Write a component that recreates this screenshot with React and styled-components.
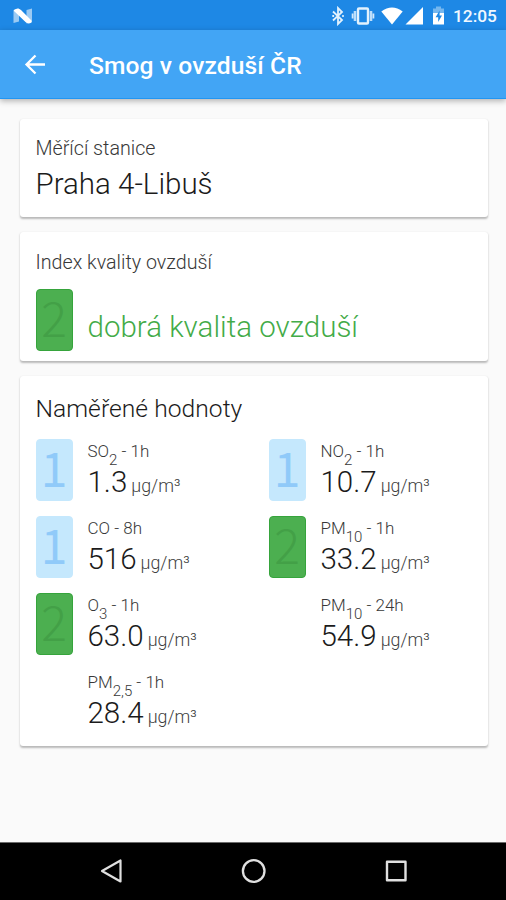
import React from 'react';
import styled, { createGlobalStyle } from 'styled-components';

const Global = createGlobalStyle`
  * { box-sizing: border-box; }
  body { margin: 0; background: #fafafa; }
`;

const Screen = styled.div`
  width: 506px;
  height: 900px;
  display: flex;
  flex-direction: column;
  overflow: hidden;
  background: #fafafa;
  color: #1b1b1b;
  font-family: Roboto, sans-serif;
`;

const StatusBar = styled.header`
  height: 30px;
  flex: none;
  display: flex;
  align-items: center;
  justify-content: space-between;
  padding: 1px 9px 0 13px;
  background: #1e88e5;
`;

const StatusIcons = styled.div`
  display: flex;
  align-items: center;
`;

const Clock = styled.span`
  margin-left: 8px;
  width: 44px;
  font-size: 17.3px;
  font-weight: 500;
  line-height: 28px;
  white-space: nowrap;
  color: #f1f8ff;
`;

const AppBar = styled.div`
  height: 69px;
  flex: none;
  display: flex;
  align-items: center;
  padding: 1px 24px 0;
  background: #42a5f5;
  border-bottom: 1px solid #2196f3;
  box-shadow: 0 2px 6px rgba(0, 0, 0, 0.3);
  z-index: 1;
`;

const Title = styled.h1`
  margin: 3px 0 0 42px;
  font-size: 24.6px;
  font-weight: 500;
  line-height: 30px;
  letter-spacing: 0.1px;
  white-space: nowrap;
  color: #fff;
`;

const Content = styled.main`
  flex: 1;
  display: flex;
  flex-direction: column;
  gap: 15px;
  padding: 20px 18px 0 20px;
`;

const Card = styled.section`
  height: ${(p) => p.$height}px;
  flex: none;
  padding: 0 15.5px;
  border-radius: 3px;
  background: #fff;
  box-shadow: 0 1.5px 2px rgba(0, 0, 0, 0.26), 0 0 1px rgba(0, 0, 0, 0.05);
`;

const Caption = styled.div`
  padding-top: ${(p) => p.$top || 17}px;
  font-size: 19.7px;
  font-weight: 300;
  line-height: 25px;
  white-space: nowrap;
  color: #383838;
`;

const Station = styled.div`
  margin-top: 5px;
  font-size: 29.5px;
  font-weight: 300;
  line-height: 36px;
  white-space: nowrap;
`;

const Heading = styled.h2`
  margin: 0;
  padding-top: 18px;
  font-size: 24.6px;
  font-weight: 300;
  line-height: 30px;
  letter-spacing: 0.05px;
`;

const Summary = styled.div`
  display: flex;
  gap: 15px;
  margin-top: 14px;
`;

const Verdict = styled.div`
  padding-top: 20px;
  font-size: 29.5px;
  font-weight: 300;
  line-height: 36px;
  white-space: nowrap;
  color: #43ab48;
`;

const palettes = {
  1: { fill: '#c5e8fd', digit: '#90caf9', edge: '#c5e8fd', weight: 400 },
  2: { fill: '#4caf50', digit: '#43a047', edge: '#36a43c', weight: 300 },
};

const Badge = styled.div`
  width: 37px;
  height: 62px;
  flex: none;
  display: flex;
  align-items: center;
  justify-content: center;
  border: 1px solid ${(p) => (p.$level ? palettes[p.$level].edge : 'transparent')};
  border-radius: 4px;
  background: ${(p) => (p.$level ? palettes[p.$level].fill : 'transparent')};
  color: ${(p) => (p.$level ? palettes[p.$level].digit : 'transparent')};
  font-family: 'Noto Sans CJK SC', 'Noto Sans', sans-serif;
  font-size: 48px;
  font-weight: ${(p) => (p.$level ? palettes[p.$level].weight : 400)};
  line-height: 60px;
  padding-bottom: 9px;
`;

const Grid = styled.div`
  display: grid;
  grid-template-columns: 233px 1fr;
  grid-auto-rows: 77px;
  margin-top: 15px;
`;

const Cell = styled.div`
  display: flex;
  gap: 15px;
`;

const Reading = styled.div`
  padding-top: 2px;
`;

const Label = styled.div`
  height: 24px;
  font-size: 17px;
  font-weight: 300;
  line-height: 20px;
  white-space: nowrap;
  color: #383838;
`;

const Sub = styled.sub`
  font-size: 15px;
  line-height: 0;
  vertical-align: -8px;
`;

const Value = styled.div`
  display: flex;
  align-items: baseline;
  gap: 4px;
  font-size: 29.5px;
  font-weight: 300;
  line-height: 34px;
  white-space: nowrap;
`;

const Unit = styled.span`
  font-size: 17.8px;
  color: #404040;
`;

const NavBar = styled.nav`
  height: 58px;
  flex: none;
  display: flex;
  align-items: center;
  justify-content: space-between;
  padding: 0 98px 2px 99px;
  border-top: 1px solid #6b6b6b;
  background: #000;
`;

const Icon = styled.svg`
  display: block;
  flex: none;
  margin-left: ${(p) => p.$gap || 0}px;
`;

const readings = [
  { level: 1, name: 'SO', sub: '2', period: '1h', value: '1.3' },
  { level: 1, name: 'NO', sub: '2', period: '1h', value: '10.7' },
  { level: 1, name: 'CO', sub: '', period: '8h', value: '516' },
  { level: 2, name: 'PM', sub: '10', period: '1h', value: '33.2' },
  { level: 2, name: 'O', sub: '3', period: '1h', value: '63.0' },
  { level: 0, name: 'PM', sub: '10', period: '24h', value: '54.9' },
  { level: 0, name: 'PM', sub: '2,5', period: '1h', value: '28.4' },
];

function StatusGlyphs() {
  return (
    <>
      <Icon width="12" height="20" viewBox="0 0 12 20" fill="none" stroke="#e3f2fd" strokeWidth="1.8">
        <path d="M1 5.5 L10 14 L6 18 V2 L10 6 L1 14.5" />
        <path d="M0.3 10h1.8M10.2 10h1.6" />
      </Icon>
      <Icon $gap={7} width="24" height="20" viewBox="0 0 24 20">
        <rect x="7" y="2.5" width="10" height="15" rx="1" fill="none" stroke="#e3f2fd" strokeWidth="2.4" />
        <path d="M4 5v10M20 5v10" stroke="#bbdefb" strokeWidth="2.6" />
        <path d="M1.6 7.5v5M22.4 7.5v5" stroke="#d3e9fc" strokeWidth="1.8" />
      </Icon>
      <Icon $gap={6} width="22" height="18" viewBox="0 0 22 18">
        <path d="M0.3 4.4 Q11 -3.4 21.7 4.4 L11 17.6 Z" fill="#fff" />
      </Icon>
      <Icon $gap={2} width="18" height="18" viewBox="0 0 18 18">
        <path d="M18 0V17.5H0.5Z" fill="#fff" />
      </Icon>
      <Icon $gap={9} width="13" height="19" viewBox="0 0 13 19">
        <path d="M4 0.5H9V2.5H12V9H1V2.5H4Z" fill="#75b7ef" />
        <path d="M1 7H12V18.5H1Z" fill="#fff" />
        <path d="M7.6 4.5 3.6 11.3H6.2V16L10 9.5H7.6Z" fill="#1e88e5" />
      </Icon>
    </>
  );
}

export default function App() {
  return (
    <Screen>
      <Global />
      <StatusBar>
        <Icon width="20" height="16" viewBox="0 0 20 16">
          <path d="M0.5 2 L6 0.5 V13.5 L0.5 15Z" fill="#9bcaf3" />
          <path d="M13.5 2 L19 0.5 V14 L13.5 15.5Z" fill="#9bcaf3" />
          <path d="M1 2 Q5-1 8 2 L18.5 12.5 V14.5 Q15 16.5 12.5 14 L1 3Z" fill="#fff" />
        </Icon>
        <StatusIcons>
          <StatusGlyphs />
          <Clock>12:05</Clock>
        </StatusIcons>
      </StatusBar>
      <AppBar>
        <Icon width="23" height="22" viewBox="0 0 23 22" fill="none" stroke="#fff" strokeWidth="2.3">
          <path d="M21 10.5H3M11.5 1.5 2.5 10.5 11.5 19.5" />
        </Icon>
        <Title>Smog v ovzduší ČR</Title>
      </AppBar>
      <Content>
        <Card $height={98}>
          <Caption>Měřící stanice</Caption>
          <Station>Praha 4-Libuš</Station>
        </Card>
        <Card $height={129}>
          <Caption $top={18}>Index kvality ovzduší</Caption>
          <Summary>
            <Badge $level={2}>2</Badge>
            <Verdict>dobrá kvalita ovzduší</Verdict>
          </Summary>
        </Card>
        <Card $height={370}>
          <Heading>Naměřené hodnoty</Heading>
          <Grid>
            {readings.map((r) => (
              <Cell key={r.name + r.sub + r.period}>
                <Badge $level={r.level}>{r.level || ''}</Badge>
                <Reading>
                  <Label>
                    {r.name}
                    {r.sub && <Sub>{r.sub}</Sub>} - {r.period}
                  </Label>
                  <Value>
                    {r.value}
                    <Unit>μg/m³</Unit>
                  </Value>
                </Reading>
              </Cell>
            ))}
          </Grid>
        </Card>
      </Content>
      <NavBar>
        <Icon width="24" height="26" viewBox="0 0 24 26" fill="none" stroke="#e0e0e0" strokeWidth="2.2" strokeLinejoin="round">
          <path d="M21.5 2.5V23.5L3 13Z" />
        </Icon>
        <Icon width="26" height="26" viewBox="0 0 26 26" fill="none" stroke="#e0e0e0" strokeWidth="2.3">
          <circle cx="12.7" cy="13" r="10.8" />
        </Icon>
        <Icon width="24" height="26" viewBox="0 0 24 26" fill="none" stroke="#e0e0e0" strokeWidth="2.4" strokeLinejoin="round">
          <rect x="3" y="3.8" width="18.5" height="18.5" />
        </Icon>
      </NavBar>
    </Screen>
  );
}
